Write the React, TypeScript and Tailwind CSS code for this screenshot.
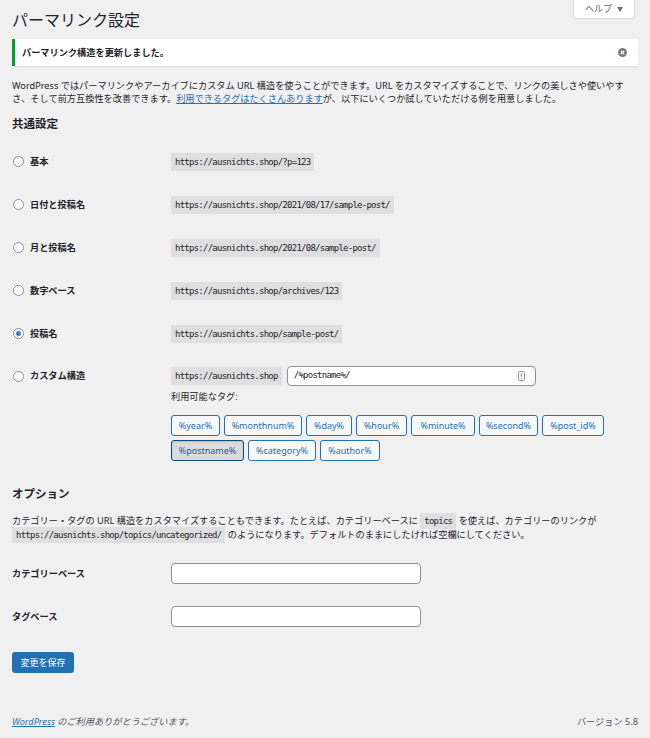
import React from "react";

const rows = [
  { label: "基本", url: "https://ausnichts.shop/?p=123", checked: false },
  { label: "日付と投稿名", url: "https://ausnichts.shop/2021/08/17/sample-post/", checked: false },
  { label: "月と投稿名", url: "https://ausnichts.shop/2021/08/sample-post/", checked: false },
  { label: "数字ベース", url: "https://ausnichts.shop/archives/123", checked: false },
  { label: "投稿名", url: "https://ausnichts.shop/sample-post/", checked: true },
];

const tagRows = [
  [
    { name: "%year%", w: "w-[49px]" },
    { name: "%monthnum%", w: "w-[78px]" },
    { name: "%day%", w: "w-[46px]" },
    { name: "%hour%", w: "w-[51px]" },
    { name: "%minute%", w: "w-[64px]" },
    { name: "%second%", w: "w-[59px]" },
    { name: "%post_id%", w: "w-[62px]" },
  ],
  [
    { name: "%postname%", w: "w-[73px]", active: true },
    { name: "%category%", w: "w-[68px]" },
    { name: "%author%", w: "w-[60px]" },
  ],
];

const sans = "font-['Noto_Sans','Noto_Sans_CJK_JP',sans-serif]";
const mono = "font-['DejaVu_Sans_Mono','Noto_Sans_CJK_JP',monospace] text-[9px] tracking-[-0.75px]";

function Radio({ checked }: { checked: boolean }) {
  return (
    <span className="w-[11px] h-[11px] rounded-full border border-[#8c8f94] bg-white flex items-center justify-center shrink-0">
      {checked && <span className="w-[5px] h-[5px] rounded-full bg-[#3582c4]" />}
    </span>
  );
}

function Code({ children }: { children: React.ReactNode }) {
  return <code className={`${mono} bg-[#dfdfe0] text-[#1d2327] px-[4px] py-[3px] leading-[12px]`}>{children}</code>;
}

export default function App() {
  return (
    <div className={`${sans} relative min-h-[738px] bg-[#f0f0f1] text-[#1d2327] px-[12px] text-[9.2px]`}>
      {/* ヘルプタブ */}
      <div className="absolute right-[15px] top-0 w-[62px] h-[19px] bg-white border border-t-0 border-[#dcdcde] rounded-b-[3px] flex items-center justify-center gap-[5px] text-[#646970] text-[9px]">
        <span>ヘルプ</span>
        <span className="text-[6px]">▼</span>
      </div>

      <h1 className="pt-[9px] text-[16px] leading-[22px] font-normal">パーマリンク設定</h1>

      <div className="mt-[8px] h-[27px] bg-white border-l-[3px] border-[#00a32a] shadow-[0_1px_1px_rgba(0,0,0,0.06)] flex items-center justify-between pl-[7px] pr-[11px]">
        <span className="font-bold">パーマリンク構造を更新しました。</span>
        <svg width="9" height="9" viewBox="0 0 10 10">
          <circle cx="5" cy="5" r="5" fill="#787c82" />
          <path d="M3.2 3.2 L6.8 6.8 M6.8 3.2 L3.2 6.8" stroke="white" strokeWidth="1.4" />
        </svg>
      </div>

      <p className="mt-[13px] leading-[13px] whitespace-nowrap">
        WordPress ではパーマリンクやアーカイブにカスタム URL 構造を使うことができます。URL をカスタマイズすることで、リンクの美しさや使いやす
        <br />
        さ、そして前方互換性を改善できます。
        <a className="text-[#2271b1] underline">利用できるタグはたくさんあります</a>
        が、以下にいくつか試していただける例を用意しました。
      </p>

      <h2 className="mt-[11px] text-[11.5px] leading-[16px] font-bold">共通設定</h2>

      <div className="mt-[8px]">
        {rows.map((r) => (
          <div key={r.label} className="h-[43px] flex items-center">
            <div className="w-[159px] flex items-center gap-[6px] pl-[1px] font-bold">
              <Radio checked={r.checked} />
              <span>{r.label}</span>
            </div>
            <Code>{r.url}</Code>
          </div>
        ))}

        <div className="pt-[11px] flex">
          <div className="w-[159px] h-[20px] flex items-center gap-[6px] pl-[1px] font-bold">
            <Radio checked={false} />
            <span>カスタム構造</span>
          </div>
          <div>
            <div className="flex items-center gap-[5px]">
              <Code>https://ausnichts.shop</Code>
              <div className="w-[249px] h-[20px] bg-white border border-[#8c8f94] rounded-[4px] flex items-center justify-between pl-[6px] pr-[10px]">
                <span className={mono}>/%postname%/</span>
                <svg width="7" height="10" viewBox="0 0 7 10">
                  <rect x="0.5" y="0.5" width="6" height="9" rx="1" fill="none" stroke="#8c8f94" />
                  <path d="M3.5 2.2 V5.8" stroke="#8c8f94" strokeWidth="1.2" />
                  <circle cx="3.5" cy="7.4" r="0.7" fill="#8c8f94" />
                </svg>
              </div>
            </div>
            <div className="mt-[4px] leading-[14px]">利用可能なタグ:</div>
            <div className="mt-[11px] flex flex-col gap-[4px]">
              {tagRows.map((row, i) => (
                <div key={i} className="flex gap-[4px]">
                  {row.map((t) => (
                    <button
                      key={t.name}
                      type="button"
                      className={`${t.w} h-[21px] rounded-[3px] border text-[9px] flex items-center justify-center ${
                        "active" in t && t.active
                          ? "bg-[#dcdcde] border-[#0a4b78] text-[#135e96] shadow-[inset_0_1px_2px_rgba(0,0,0,0.15)]"
                          : "bg-[#f6f7f7] border-[#2271b1] text-[#2271b1]"
                      }`}
                    >
                      {t.name}
                    </button>
                  ))}
                </div>
              ))}
            </div>
          </div>
        </div>
      </div>

      <h2 className="mt-[25px] text-[11.5px] leading-[16px] font-bold">オプション</h2>

      <p className="mt-[12px] leading-[14px] whitespace-nowrap">
        カテゴリー・タグの URL 構造をカスタマイズすることもできます。たとえば、カテゴリーベースに <Code>topics</Code> を使えば、カテゴリーのリンクが
        <br />
        <Code>https://ausnichts.shop/topics/uncategorized/</Code> のようになります。デフォルトのままにしたければ空欄にしてください。
      </p>

      <div className="mt-[21px] flex items-center">
        <label className="w-[159px] font-bold">カテゴリーベース</label>
        <input className="w-[250px] h-[21px] bg-white border border-[#8c8f94] rounded-[4px]" />
      </div>
      <div className="mt-[22px] flex items-center">
        <label className="w-[159px] font-bold">タグベース</label>
        <input className="w-[250px] h-[21px] bg-white border border-[#8c8f94] rounded-[4px]" />
      </div>

      <button type="button" className="mt-[25px] w-[62px] h-[21px] bg-[#2271b1] text-white rounded-[3px] text-[9px]">
        変更を保存
      </button>

      <div className="mt-[42px] flex justify-between items-center text-[#50575e] leading-[14px]">
        <span className="italic">
          <a className="text-[#2271b1] underline">WordPress</a> のご利用ありがとうございます。
        </span>
        <span>バージョン 5.8</span>
      </div>
    </div>
  );
}
